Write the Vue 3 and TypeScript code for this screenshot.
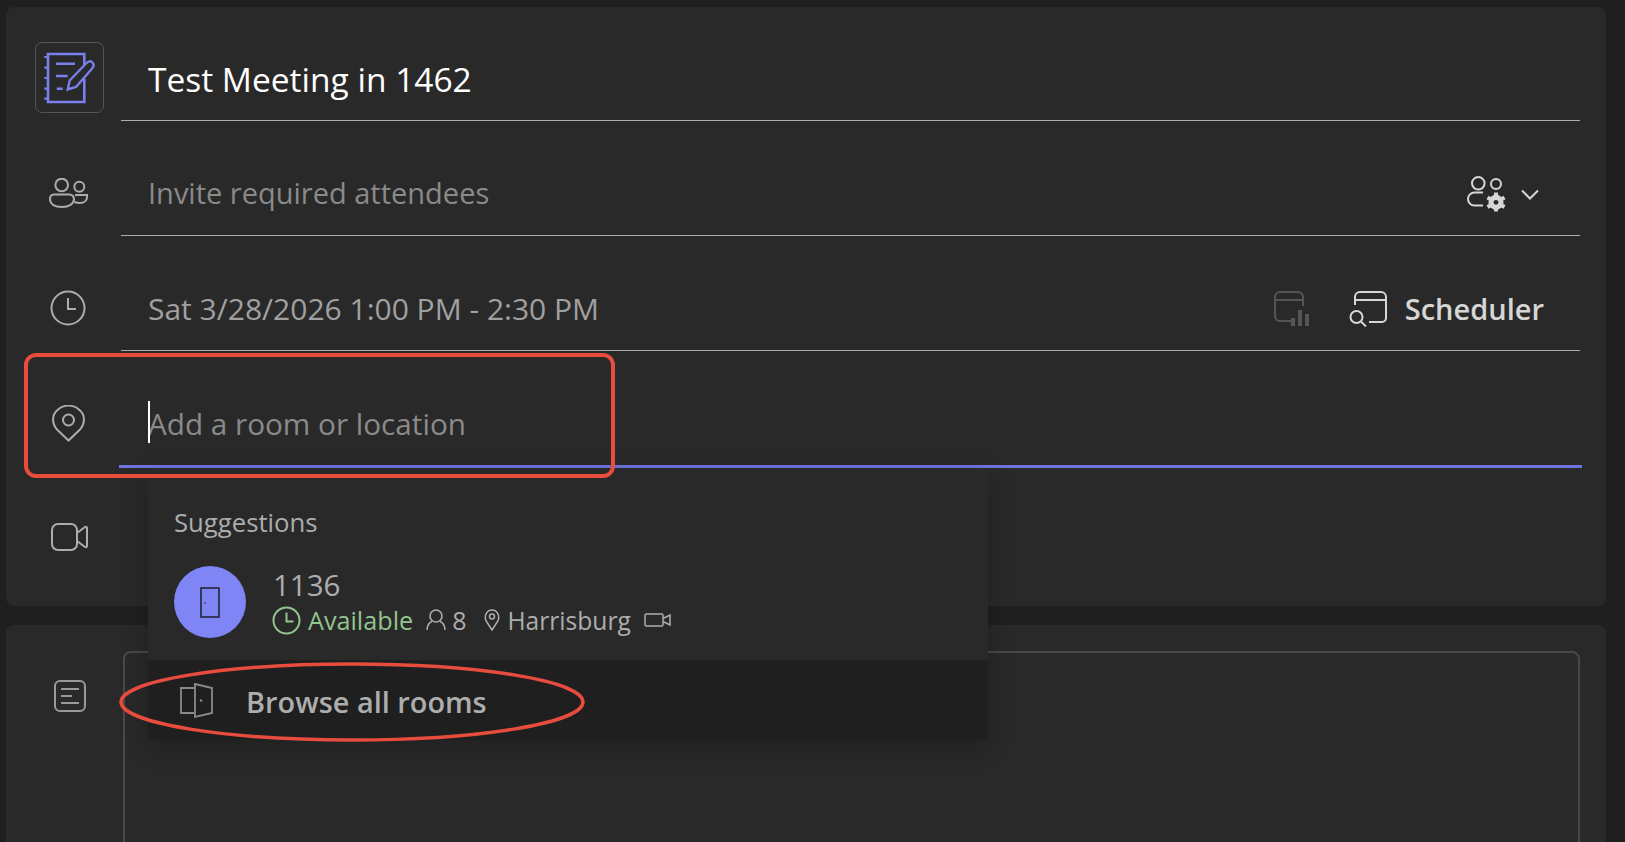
<script setup lang="ts">
const title = "Test Meeting in 1462";
const room = { name: "1136", status: "Available", seats: "8", place: "Harrisburg" };
</script>

<template>
  <div class="page">
    <section class="card card-top">
      <div class="row row-first">
        <div class="row-icon">
          <span class="form-badge">
            <svg width="52" height="52" viewBox="0 0 52 52" fill="none" stroke="#7a80eb" stroke-width="2.6">
              <path d="M40.300 13V2H4v48h36.300V27" />
              <path d="M.3 5h3.500M.3 15.700h3.500M.3 26h3.500M.3 36.700h3.500M.3 46.700h3.500" stroke-width="2.200" />
              <path d="M12 11.700h19M12 24h11.700M12.700 36.700h6" />
              <path d="M23.700 37.500l2-9L42 11.500c2.500-2.500 5-2.500 6.500-1s1.500 4-.8 6.500L32 35z" stroke-width="2.400" />
            </svg>
          </span>
        </div>
        <div class="field">
          <span class="title-text">{{ title }}</span>
        </div>
      </div>

      <div class="row">
        <div class="row-icon">
          <svg class="ico ico-low" width="40" height="30" viewBox="0 0 40 30" fill="none" stroke="#adadad" stroke-width="2">
            <circle cx="12.700" cy="7" r="6.300" />
            <path d="M5 16.500h15.500a4.500 4.500 0 0 1 4.500 4.500c0 5-5 8-12.200 8S1 26 1 21a4.500 4.500 0 0 1 4-4.500z" />
            <circle cx="30.300" cy="8.700" r="5" />
            <path d="M26 17h12v2c0 3.500-3 6-7 6-2 0-4-.3-5.500-1" />
          </svg>
        </div>
        <div class="field">
          <span class="placeholder invite">Invite required attendees</span>
          <div class="field-end field-end-wide">
            <svg width="40" height="36" viewBox="0 0 40 36" fill="none" stroke="#d6d6d6" stroke-width="2">
              <circle cx="11.300" cy="7.300" r="6.300" />
              <path d="M16 16.500H7.500a6.500 6.500 0 0 0 0 13H16" />
              <circle cx="29" cy="8" r="5" />
              <circle cx="29" cy="26.300" r="7.500" fill="#d6d6d6" stroke="none" />
              <path d="M29 16.500v3.500M29 32.500v3M20.500 21.500l3.500 2M34 29l3.500 2M37.500 21.500l-3.500 2M24 29l-3.500 2" stroke-width="4" />
              <circle cx="29" cy="26.300" r="2.400" fill="#292929" stroke="none" />
            </svg>
            <svg class="chev" width="18" height="11" viewBox="0 0 18 11" fill="none" stroke="#d6d6d6" stroke-width="2">
              <path d="M1 1.500l8 8 8-8" />
            </svg>
          </div>
        </div>
      </div>

      <div class="row">
        <div class="row-icon">
          <svg class="ico" width="36" height="36" viewBox="0 0 36 36" fill="none" stroke="#adadad" stroke-width="2">
            <circle cx="18" cy="18" r="16.500" />
            <path d="M18 8v11h8" />
          </svg>
        </div>
        <div class="field">
          <span class="placeholder date">Sat 3/28/2026 1:00 PM - 2:30 PM</span>
          <div class="field-end">
            <svg width="36" height="36" viewBox="0 0 36 36" fill="none" stroke="#555" stroke-width="2">
              <path d="M20 30H7a5 5 0 0 1-5-5V6a5 5 0 0 1 5-5h18a5 5 0 0 1 5 5v9M2 9h28" />
              <path d="M20 27v8M27 19v16M34 23v12" stroke-width="4" />
            </svg>
            <svg class="sched-ico" width="38" height="36" viewBox="0 0 38 36" fill="none" stroke="#d6d6d6" stroke-width="2">
              <path d="M6 14V6a5 5 0 0 1 5-5h21a5 5 0 0 1 5 5v21a4 4 0 0 1-4 4H20M6 9h31" />
              <circle cx="7.500" cy="26" r="6" />
              <path d="M12 30.500l5 5" />
            </svg>
            <span class="sched-text">Scheduler</span>
          </div>
        </div>
      </div>

      <div class="row">
        <div class="row-icon">
          <svg class="ico" width="33" height="37" viewBox="0 0 33 37" fill="none" stroke="#adadad" stroke-width="2">
            <path d="M16.500 35.500L6 25.500C-.5 19-.5 10 5.500 5a16 16 0 0 1 22 0c6 5 6 14-.5 20.500z" />
            <circle cx="16.500" cy="15" r="5.500" />
          </svg>
        </div>
        <div class="field field-active">
          <span class="caret"></span>
          <span class="placeholder location">Add a room or location</span>
        </div>
      </div>

      <div class="row row-last">
        <div class="row-icon">
          <svg class="ico ico-low" width="37" height="28" viewBox="0 0 37 28" fill="none" stroke="#adadad" stroke-width="2">
            <rect x="1" y="1" width="25" height="26" rx="6" />
            <path d="M26 10l8-6c1-.6 2 0 2 1v18c0 1-1 1.600-2 1l-8-6" />
          </svg>
        </div>
      </div>

      <div class="dropdown">
        <div class="suggest">
          <div class="suggest-label">Suggestions</div>
          <div class="room">
            <span class="room-avatar">
              <svg width="20" height="31" viewBox="0 0 20 31" fill="none" stroke="#23233a" stroke-width="1.600">
                <rect x="1" y="1" width="18" height="29" />
                <circle cx="5" cy="16" r=".8" fill="#23233a" stroke="none" />
              </svg>
            </span>
            <div class="room-info">
              <div class="room-name">{{ room.name }}</div>
              <div class="room-meta">
                <svg class="m-clock" width="29" height="29" viewBox="0 0 29 29" fill="none" stroke="#92c48e" stroke-width="2">
                  <circle cx="14.500" cy="14.500" r="13" />
                  <path d="M14.500 6.500v9h7" />
                </svg>
                <span class="avail">{{ room.status }}</span>
                <svg class="m-person" width="20" height="22" viewBox="0 0 20 22" fill="none" stroke="#adadad" stroke-width="1.600">
                  <circle cx="10" cy="7" r="6" />
                  <path d="M1 21c0-5 3-8 5-8.500M19 21c0-5-3-8-5-8.500" />
                </svg>
                <span class="seats">{{ room.seats }}</span>
                <svg class="m-pin" width="16" height="22" viewBox="0 0 16 22" fill="none" stroke="#adadad" stroke-width="1.500">
                  <path d="M8 21L2.500 12.500C-.5 7.500 2.500 1 8 1s8.500 6.500 5.500 11.500z" />
                  <circle cx="8" cy="7.500" r="2.500" />
                </svg>
                <span class="place">{{ room.place }}</span>
                <svg class="m-video" width="28" height="14" viewBox="0 0 28 14" fill="none" stroke="#adadad" stroke-width="1.500">
                  <rect x="1" y="1" width="18" height="12" rx="1.500" />
                  <path d="M19 5.500l7-3.500v10l-7-3.500" />
                </svg>
              </div>
            </div>
          </div>
        </div>
        <div class="browse">
          <svg width="33" height="35" viewBox="0 0 33 35" fill="none" stroke="#8a8a8a" stroke-width="1.800">
            <path d="M14 5H1v25h13" />
            <path d="M15 1l17 4v25l-17 4z" />
            <circle cx="21" cy="17.500" r="1.300" fill="#8a8a8a" stroke="none" />
          </svg>
          <span class="browse-text">Browse all rooms</span>
        </div>
      </div>
    </section>

    <section class="card card-bottom">
      <div class="notes-icon">
        <svg width="32" height="32" viewBox="0 0 32 32" fill="none" stroke="#999" stroke-width="2">
          <rect x="1" y="1" width="30" height="30" rx="5" />
          <path d="M7 9h18M7 16h11M7 23h18" />
        </svg>
      </div>
      <div class="editor"></div>
    </section>

    <div class="mark-rect"></div>
    <svg class="mark-oval" width="470" height="82" viewBox="0 0 470 82" fill="none" stroke="#e74c3c" stroke-width="3.500">
      <ellipse cx="235" cy="41" rx="231" ry="38" />
    </svg>
  </div>
</template>

<style>
html,
body {
  margin: 0;
  background: #1f1f1f;
}
</style>

<style scoped>
.page {
  position: relative;
  width: 1625px;
  height: 842px;
  overflow: hidden;
  box-sizing: border-box;
  padding: 7px 19px 0 6px;
  background: #1f1f1f;
  font-family: "Open Sans", "Noto Sans", sans-serif;
}

.card {
  background: #292929;
  border-radius: 8px;
}

.card-top {
  position: relative;
  height: 599px;
}

.card-bottom {
  display: flex;
  height: 300px;
  margin-top: 19px;
  padding-top: 26px;
  box-sizing: border-box;
}

.row {
  display: flex;
  height: 115px;
}

.row-first,
.row-first .field,
.row-first .row-icon {
  height: 114px;
}

.row-last {
  height: auto;
}

.row-icon {
  display: flex;
  flex: none;
  align-items: flex-start;
  justify-content: center;
  box-sizing: border-box;
  width: 69px;
  height: 115px;
  margin: 0 17px 0 29px;
  padding-top: 35px;
}

.ico {
  margin: 19px 3px 0 0;
}

.ico-low {
  margin: 22px 1px 0 0;
}

.form-badge {
  display: flex;
  align-items: center;
  justify-content: center;
  box-sizing: border-box;
  width: 69px;
  height: 71px;
  border: 1px solid #555;
  border-radius: 7px;
}

.field {
  position: relative;
  display: flex;
  flex: 1;
  align-items: flex-start;
  justify-content: space-between;
  box-sizing: border-box;
  height: 115px;
  margin-right: 26px;
  padding: 46px 27px 0;
  border-bottom: 1px solid #adadad;
}

.field-active {
  height: 117px;
  margin: 0 24px 0 -2px;
  padding-left: 29px;
  border-bottom: 3px solid #6f74dd;
}

.title-text,
.placeholder {
  font-size: 30px;
  line-height: 54px;
}

.title-text {
  color: #fff;
  font-size: 33.500px;
  line-height: 52px;
}

.placeholder {
  color: #8a8a8a;
}

.invite {
  font-size: 29px;
  line-height: 52px;
}

.location {
  font-size: 29.700px;
}

.date {
  color: #a0a0a0;
}

.caret {
  position: absolute;
  top: 50px;
  left: 29px;
  width: 2px;
  height: 42px;
  background: #fff;
}

.field-end {
  display: flex;
  align-items: center;
  height: 54px;
  margin-right: 9px;
  color: #d6d6d6;
}

.field-end-wide {
  margin-right: 14px;
}

.chev {
  margin-left: 14px;
}

.sched-ico {
  margin-left: 40px;
}

.sched-text {
  margin: -2px 0 0 18px;
  font-size: 29px;
  font-weight: 600;
}

.dropdown {
  position: absolute;
  top: 461px;
  left: 142px;
  z-index: 2;
  width: 840px;
  border-radius: 0 0 5px 5px;
  background: #292929;
  box-shadow: 0 8px 24px rgba(0, 0, 0, 0.22);
}

.suggest {
  box-sizing: border-box;
  height: 192px;
  padding: 36px 26px 0;
}

.suggest-label {
  color: #adadad;
  font-size: 25.700px;
  line-height: 38px;
}

.room {
  display: flex;
  gap: 27px;
  margin-top: 24px;
}

.room-avatar {
  display: flex;
  flex: none;
  align-items: center;
  justify-content: center;
  width: 72px;
  height: 72px;
  border-radius: 50%;
  background: #7f85f5;
}

.room-info {
  margin-top: 1px;
}

.room-name {
  color: #adadad;
  font-size: 29.500px;
  line-height: 36px;
}

.room-meta {
  display: flex;
  align-items: center;
  height: 34px;
  color: #adadad;
  font-size: 25px;
}

.m-clock {
  flex: none;
  margin-left: -1px;
}

.avail {
  margin-left: 7px;
  color: #92c48e;
  font-size: 25.200px;
}

.m-person {
  margin-left: 13px;
}

.seats {
  margin-left: 6px;
}

.m-pin {
  margin-left: 18px;
}

.place {
  margin-left: 7px;
  font-size: 24.600px;
}

.m-video {
  margin-left: 13px;
}

.browse {
  display: flex;
  align-items: center;
  gap: 33px;
  box-sizing: border-box;
  height: 80px;
  padding-left: 32px;
  border-radius: 0 0 5px 5px;
  background: #1f1f1f;
  color: #adadad;
  font-size: 28.900px;
  font-weight: 600;
}

.browse-text {
  margin-top: 3px;
}

.notes-icon {
  display: flex;
  flex: none;
  justify-content: center;
  width: 69px;
  margin: 29px 19px 0 29px;
}

.editor {
  flex: 1;
  margin-right: 26px;
  border: 2px solid #484848;
  border-radius: 8px;
}

.mark-rect {
  position: absolute;
  top: 353px;
  left: 24px;
  z-index: 3;
  box-sizing: border-box;
  width: 591px;
  height: 125px;
  border: 4px solid #e74c3c;
  border-radius: 12px;
}

.mark-oval {
  position: absolute;
  top: 661px;
  left: 117px;
  z-index: 3;
}
</style>
